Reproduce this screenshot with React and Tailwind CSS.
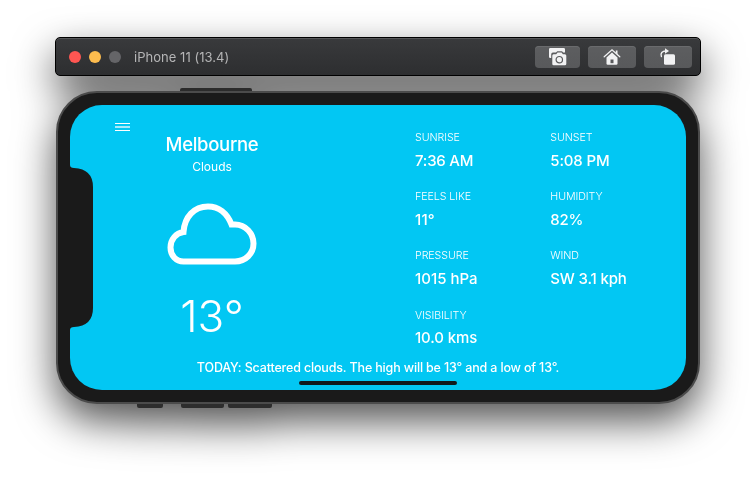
const stats = [
  { label: 'SUNRISE', value: '7:36 AM', vw: 'tracking-[-0.22px]' },
  { label: 'SUNSET', value: '5:08 PM', vw: 'tracking-[-0.15px]' },
  { label: 'FEELS LIKE', value: '11°', vw: 'tracking-[0.2px]' },
  { label: 'HUMIDITY', value: '82%', vw: 'tracking-[-0.3px]' },
  { label: 'PRESSURE', value: '1015 hPa', vw: 'tracking-[0px]' },
  { label: 'WIND', value: 'SW 3.1 kph', vw: 'tracking-[-0.15px]' },
  { label: 'VISIBILITY', value: '10.0 kms', vw: 'tracking-[-0.12px]' },
];

function ToolButton({ width, children }) {
  return (
    <button className={`${width} flex h-[22px] items-center justify-center rounded-[4px] bg-linear-to-b from-[#5d5e60] to-[#58595b] shadow-[inset_0_1px_0_#6a6b6d]`}>
      {children}
    </button>
  );
}

function CameraIcon() {
  return (
    <svg width="18" height="18" viewBox="0 0 18 18" fill="#f2f2f3">
      <path d="M1.3 0h13.4Q16 0 16 1.3V4.500h-1.800l-1.200-1.300H8.300L7 4.600H4Q2.200 4.600 2.200 6.500V10H1.300Q0 10 0 8.700V1.300Q0 0 1.300 0z" />
      <path d="M4.500 6.200h2.700l1.400-1.600h3.900l1.400 1.600h2Q17.300 6.200 17.300 7.700v8.200q0 1.400-1.400 1.400H4.700q-1.400 0-1.400-1.400V7.700q0-1.500 1.200-1.500z" />
      <circle cx="10.300" cy="11.700" r="3.200" fill="none" stroke="#58595b" strokeWidth="1.200" />
    </svg>
  );
}

function HomeIcon() {
  return (
    <svg width="18" height="18" viewBox="0 0 18 18">
      <path d="M3.500 9.400L9 4.400l5.500 5v6.100q0 1.200-1.200 1.200H4.700q-1.200 0-1.200-1.200z" fill="#f2f2f3" />
      <path d="M12.800 2.500h1.700v4L12.800 5z" fill="#f2f2f3" />
      <path d="M1.200 8.800L9 1.800 16.800 8.800" fill="none" stroke="#f2f2f3" strokeWidth="1.300" strokeLinecap="round" />
      <path d="M7.500 11.500h3v3.700h-3z" fill="#58595b" />
    </svg>
  );
}

function RotateIcon() {
  return (
    <svg width="18" height="18" viewBox="0 0 18 18">
      <rect x="5" y="6.300" width="11" height="10.400" rx="1.500" fill="#f2f2f3" />
      <path d="M2.400 8.500C1 5.300 3.400 3 6.800 3" fill="none" stroke="#f2f2f3" strokeWidth="1.400" strokeLinecap="round" />
      <path d="M6 .2L10 3 6 5.800z" fill="#f2f2f3" />
    </svg>
  );
}

export default function App() {
  return (
    <div className="h-[484px] w-[756px] overflow-hidden bg-white pt-[37px] font-['Inter',sans-serif]">
      <div className="mx-auto w-[646px] [filter:drop-shadow(0_17px_20px_rgba(0,0,0,0.68))]">
        <header className="flex h-[39px] items-center rounded-[5px] border border-black bg-linear-to-b from-[#393a3c] to-[#2d2e30] pr-2 pl-[13px] shadow-[inset_0_1px_0_#555658]">
          <div className="flex gap-2">
            <span className="size-3 rounded-full bg-[#ff5652]" />
            <span className="size-3 rounded-full bg-[#fdbc4e]" />
            <span className="size-3 rounded-full bg-[#656568]" />
          </div>
          <h1 className="ml-[13px] text-[13px] leading-4 tracking-[0.03px] text-[#b5b5b6]">iPhone 11 (13.4)</h1>
          <div className="ml-auto flex gap-2">
            <ToolButton width="w-[45px]"><CameraIcon /></ToolButton>
            <ToolButton width="w-12"><HomeIcon /></ToolButton>
            <ToolButton width="w-12"><RotateIcon /></ToolButton>
          </div>
        </header>

        <div className="mt-3 ml-[125px] h-1 w-[72px] rounded-t-[2px] bg-[#2b2b2b]" />

        <main className="relative z-10 mx-px -mt-px h-[313px] rounded-[41px] border-2 border-[#4b4b4b] bg-[#1a1a1a] p-3">
          <div className="flex h-[285px] w-[616px] overflow-hidden rounded-[32px] bg-[#02c7f3]">
            <svg className="mt-[60px] h-[165px] w-[23px] shrink-0" viewBox="0 0 23 165" fill="#1a1a1a">
              <path d="M0 0Q0 3 4 3Q23 4 23 22V143Q23 161 4 162Q0 162 0 165z" />
            </svg>
            <div className="flex w-[593px] flex-col">
              <div className="flex h-[253px]">
                <svg className="mt-[18px] ml-[22px] shrink-0" width="15" height="9" viewBox="0 0 15 9" stroke="#fff">
                  <path d="M0 .5h15M0 7.500h15" />
                  <path d="M0 4h15" strokeWidth="2" opacity=".65" />
                </svg>
                <section className="ml-[10px] flex w-[144px] flex-col items-center text-white">
                  <h2 className="mt-[27px] text-[18.500px] leading-6 font-[550] tracking-[-0.3px]">Melbourne</h2>
                  <p className="mt-[3px] text-[12px] leading-4">Clouds</p>
                  <svg className="mt-[28px]" width="90" height="62" viewBox="0 0 90 62" fill="none" stroke="#fff" strokeWidth="6">
                    <path d="M16.500 58.500H68C78.500 58.500 86.500 50.500 86.500 40.500S78.500 21.500 68 21.500H64.500C60 10 51.500 3.500 41 3.500C27 3.500 17.500 14 16.500 29C9 30 3.500 36.500 3.500 44.500C3.500 52.500 9 58.500 16.500 58.500z" />
                  </svg>
                  <p className="mt-[25px] text-[44px] leading-[52px] font-[330]">13°</p>
                </section>
                <dl className="mt-[25px] ml-[131px] grid auto-rows-[59.200px] grid-cols-[135.300px_120px] text-white">
                  {stats.map((s) => (
                    <div key={s.label}>
                      <dt className="text-[10.700px] leading-4 font-light tracking-[-0.08px] whitespace-nowrap">{s.label}</dt>
                      <dd className={`mt-[4.500px] text-[15px] leading-5 font-medium whitespace-nowrap ${s.vw}`}>{s.value}</dd>
                    </div>
                  ))}
                </dl>
              </div>
              <p className="-ml-[23px] pt-px text-center text-[12.500px] leading-[17px] font-medium tracking-[-0.16px] whitespace-nowrap text-white">
                TODAY: Scattered clouds. The high will be 13° and a low of 13°.
              </p>
              <div className="mt-[5px] ml-[206px] h-[4px] w-[158px] rounded-full bg-[#101a1d]" />
            </div>
          </div>
        </main>

        <div className="-mt-[2px] ml-[82px] flex h-[6px]">
          <span className="w-[26px] rounded-b-[2px] bg-[#2d2d2d]" />
          <span className="ml-[18px] w-[43px] rounded-b-[2px] bg-[#2d2d2d]" />
          <span className="ml-1 w-11 rounded-b-[2px] bg-[#2d2d2d]" />
        </div>
      </div>
    </div>
  );
}
